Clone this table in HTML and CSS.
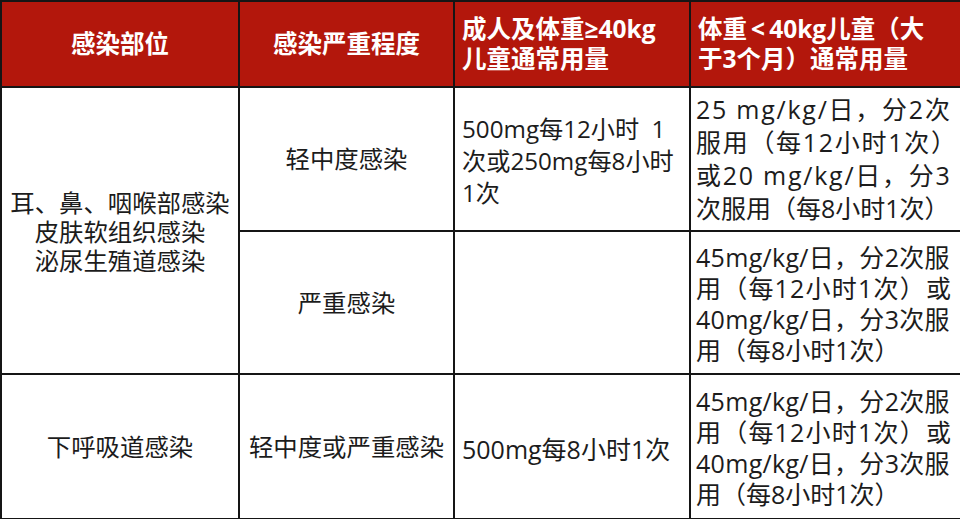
FILE: index.html
```html
<!DOCTYPE html>
<html lang="zh">
<head>
<meta charset="utf-8">
<link rel="stylesheet" href="styles.css">
</head>
<body>
<table class="dose">
  <colgroup>
    <col class="c1"><col class="c2"><col class="c3"><col class="c4">
  </colgroup>
  <thead>
    <tr class="head">
      <th class="center">感染部位</th>
      <th class="center">感染严重程度</th>
      <th class="left">成人及体重≥40kg<br>儿童通常用量</th>
      <th class="left">体重&thinsp;&lt;&thinsp;40kg儿童（大<br>于3个月）通常用量</th>
    </tr>
  </thead>
  <tbody>
    <tr class="r1">
      <td class="center site" rowspan="2">耳、鼻、咽喉部感染<br>皮肤软组织感染<br>泌尿生殖道感染</td>
      <td class="center sev">轻中度感染</td>
      <td class="left dose-a small"><span class="ws">500mg每12小时 1</span><br>次或250mg每8小时<br>1次</td>
      <td class="left dose-c"><span class="ls-a">25 mg/kg/日，分2次</span><br><span class="ls-b">服用（每12小时1次）</span><br><span class="ls-a">或20 mg/kg/日，分3</span><br>次服用（每8小时1次）</td>
    </tr>
    <tr class="r2">
      <td class="center sev">严重感染</td>
      <td class="left dose-a"></td>
      <td class="left dose-c tight"><span class="ls-c">45mg/kg/日，分2次服</span><br><span class="ls-d">用（每12小时1次）或</span><br><span class="ls-c">40mg/kg/日，分3次服</span><br>用（每8小时1次）</td>
    </tr>
    <tr class="r3">
      <td class="center sev">下呼吸道感染</td>
      <td class="center sev">轻中度或严重感染</td>
      <td class="left dose-a">500mg每8小时1次</td>
      <td class="left dose-c tight"><span class="ls-c">45mg/kg/日，分2次服</span><br><span class="ls-d">用（每12小时1次）或</span><br><span class="ls-c">40mg/kg/日，分3次服</span><br>用（每8小时1次）</td>
    </tr>
  </tbody>
</table>
</body>
</html>
```

FILE: styles.css
```css
html, body {
  margin: 0;
  padding: 0;
  background: #ffffff;
}
body {
  font-family: "Open Sans", "Noto Sans CJK SC", sans-serif;
  color: #1c1c1c;
}
.dose {
  width: 960px;
  border-collapse: collapse;
  table-layout: fixed;
}
.c1 { width: 238px; }
.c2 { width: 215px; }
.c3 { width: 236px; }
.c4 { width: 271px; }
.dose th, .dose td {
  border: 2px solid #151515;
  padding: 0 7px;
  white-space: nowrap;
  overflow: hidden;
  vertical-align: middle;
}
.dose th {
  background: #b3170c;
  color: #ffffff;
  font-weight: 700;
  font-size: 24.5px;
  line-height: 30px;
}
.dose td {
  font-weight: 400;
}
.dose td.site {
  font-size: 24.4px;
  line-height: 29px;
  padding: 1px 2px 0;
}
.dose td.sev {
  font-size: 24.4px;
  line-height: 32px;
  padding: 0 2px;
}
.dose td.dose-a {
  font-size: 25px;
  line-height: 32px;
  padding-top: 4px;
}
.dose td.dose-a.small {
  font-size: 24.2px;
}
.dose td.dose-c {
  font-size: 25px;
  line-height: 33px;
  padding: 0 4px 0 5px;
}
.dose td.dose-c.tight {
  line-height: 31px;
  padding-top: 2px;
}
.ws { word-spacing: 6px; }
.ls-a { letter-spacing: 1.75px; }
.ls-b { letter-spacing: 1.7px; }
.ls-c { letter-spacing: 0.3px; }
.ls-d { letter-spacing: 1.2px; }
.head { height: 86px; }
.r1 { height: 144px; }
.r2 { height: 143px; }
.r3 { height: 145px; }
.center { text-align: center; }
.left { text-align: left; }
```
